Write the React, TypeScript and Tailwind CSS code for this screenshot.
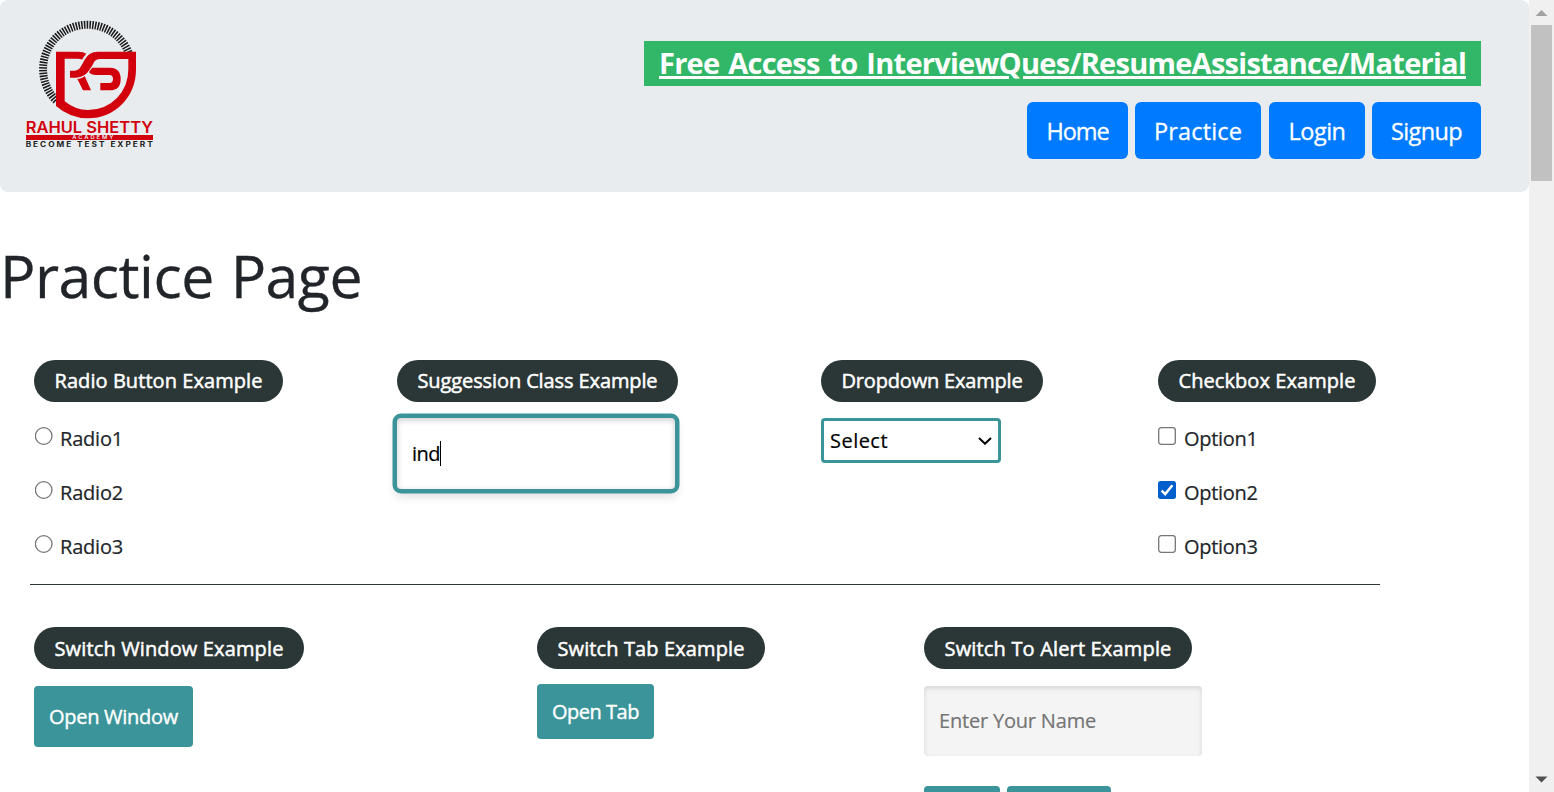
import { useLayoutEffect, useRef, useState } from "react";

const FONT = "font-['Open_Sans',sans-serif]";

/** Text tracked so that its advance equals `w` pixels. */
function Fit({ w, word = 0, children }: { w: number; word?: number; children: string }) {
  const ref = useRef<HTMLSpanElement>(null);
  const [gap, setGap] = useState(0);
  useLayoutEffect(() => {
    if (ref.current) {
      ref.current.style.letterSpacing = "0px";
      const natural = ref.current.getBoundingClientRect().width;
      const next = (w - natural) / children.length;
      ref.current.style.letterSpacing = next + "px";
      setGap(next);
    }
  }, [w, word, children]);
  return (
    <span ref={ref} className="inline-block whitespace-nowrap" style={{ letterSpacing: gap, wordSpacing: word }}>
      {children}
    </span>
  );
}

function Logo() {
  return (
    <svg className="h-[200px] w-[180px] shrink-0" viewBox="0 0 540 600" aria-label="Rahul Shetty Academy">
      <path
        d="M 169 302 A 133 133 0 1 1 387 161"
        fill="none"
        stroke="#1c1c1c"
        strokeWidth="24"
        strokeDasharray="4.6 3.6"
      />
      <g fill="#d2000c">
        <path d="M168 155H236Q250 155 259 161L247 179Q241 176 232 176H194V304Q226 330 264 330Q316 330 351 294Q385 259 385 208V177H300Q287 177 281 188Q277 197 270 208Q254 233 229 233H210V212H224Q236 212 243 199L254 179Q267 155 293 155H408V208Q408 270 366 313Q324 355 264 355Q210 355 168 318Z" />
        <path d="M277 203H330Q362 204 362 237Q362 271 330 271H301V249H328Q339 249 339 237Q339 225 328 225H285Q268 224 267 214Z" />
        <path d="M232 237Q246 235 254 228L273 271H249Z" />
      </g>
      <path d="M277 199Q267 219 256 226Q247 234 230 236" fill="none" stroke="#e8ecef" strokeWidth="2" />
      <path d="M262 161Q252 168 246 180" fill="none" stroke="#e8ecef" strokeWidth="2" />
      <text x="77" y="398" fontSize="46" fontWeight="600" fill="#d2000c" textLength="382" lengthAdjust="spacingAndGlyphs" className="font-['Inter',sans-serif]">RAHUL SHETTY</text>
      <rect x="78" y="405" width="381" height="15" fill="#d2000c" />
      <text x="217" y="418" fontSize="15" fontWeight="600" fill="#e8ecef" textLength="129" letterSpacing="5" lengthAdjust="spacingAndGlyphs" className="font-['Inter',sans-serif]">ACADEMY</text>
      <text x="77" y="440" fontSize="21" fontWeight="700" fill="#1c1c1c" textLength="387" letterSpacing="5" lengthAdjust="spacingAndGlyphs" className="font-['Inter',sans-serif]">BECOME TEST EXPERT</text>
    </svg>
  );
}

function NavButton({ box, w, label }: { box: string; w: number; label: string }) {
  return (
    <button className={`flex h-[57px] items-center justify-center rounded-[6px] bg-[#007bff] text-[23.5px] leading-[36px] text-white [-webkit-text-stroke:0.3px_#fff] ${box}`}>
      <Fit w={w}>{label}</Fit>
    </button>
  );
}

function Pill({ box, w, label }: { box: string; w: number; label: string }) {
  return (
    <div className={`flex h-[42px] items-center justify-center rounded-full bg-[#2b3636] text-[20px] leading-[30px] text-white [-webkit-text-stroke:0.5px_#fff] ${box}`}>
      <Fit w={w}>{label}</Fit>
    </div>
  );
}

function Choice({ kind, label, w, checked }: { kind: "radio" | "check"; label: string; w: number; checked?: boolean }) {
  return (
    <label className="flex h-[54px] text-[20px] leading-[30px] text-[#212529] [-webkit-text-stroke:0.2px_#212529]">
      <svg className="mt-[3px] h-[18px] w-[18px]" viewBox="0 0 18 18">
        {kind === "radio" && <circle cx="8.7" cy="9" r="8.3" fill="#fff" stroke="#767676" strokeWidth="1.3" />}
        {kind === "check" && !checked && <rect x="0.7" y="0.7" width="16.6" height="16.6" rx="2.5" fill="#fff" stroke="#767676" strokeWidth="1.3" />}
        {checked && (
          <>
            <rect width="18" height="18" rx="2.7" fill="#005fcc" />
            <path d="M3.6 9.6L7.2 13.1L14.4 4.2" fill="none" stroke="#fff" strokeWidth="2.5" />
          </>
        )}
      </svg>
      <span className={kind === "radio" ? "ml-[7px]" : "ml-[8px]"}>
        <Fit w={w}>{label}</Fit>
      </span>
    </label>
  );
}

export default function App() {
  return (
    <div className={`flex h-[792px] w-[1554px] overflow-hidden bg-white ${FONT}`}>
      <main className="h-[792px] w-[1529px] overflow-hidden">
        <header className="flex h-[192px] justify-between overflow-hidden rounded-[8px] bg-[#e8ecef] pr-[48px]">
          <Logo />
          <div className="flex flex-col items-end pt-[41px]">
            <a className="flex h-[45px] w-[837px] items-center justify-center bg-[#32b768] pb-[2px] text-[29px] font-bold leading-[43px] text-white underline decoration-[3px] underline-offset-[2px]">
              <Fit w={807} word={2}>Free Access to InterviewQues/ResumeAssistance/Material</Fit>
            </a>
            <nav className="mt-4 flex">
              <NavButton box="w-[101px]" w={62} label="Home" />
              <NavButton box="ml-[7px] w-[126px]" w={88} label="Practice" />
              <NavButton box="ml-[8px] w-[96px]" w={57} label="Login" />
              <NavButton box="ml-[7px] w-[109px]" w={71} label="Signup" />
            </nav>
          </div>
        </header>

        <h1 className="mt-[47px] h-[72px] text-[59px] font-normal leading-[72px] text-[#212529] [-webkit-text-stroke:0.3px_#212529]">
          <Fit w={362} word={2}>Practice Page</Fit>
        </h1>

        <section className="ml-[30px] mt-[49px] flex h-[225px] w-[1350px] border-b border-[#2b3636] pl-1">
          <div className="w-[363px]">
            <Pill box="w-[249px] pb-[1px]" w={208} label="Radio Button Example" />
            <div className="ml-[1px] mt-[22px]">
              <Choice kind="radio" label="Radio1" w={63} />
              <Choice kind="radio" label="Radio2" w={63} />
              <Choice kind="radio" label="Radio3" w={63} />
            </div>
          </div>
          <div className="w-[424px]">
            <Pill box="w-[281px] pb-[1px]" w={240} label="Suggession Class Example" />
            <div className="mt-[16px] flex h-[71px] w-[278px] items-center rounded-[4px] bg-white pl-[15px] text-[20px] leading-[30px] text-black shadow-[inset_0_2px_6px_rgba(0,0,0,0.2),0_0_0_4.5px_#3a949a,0_6px_10px_2px_rgba(0,0,0,0.13)] [-webkit-text-stroke:0.2px_#000]">
              <Fit w={28}>ind</Fit>
              <span className="h-[25px] w-px bg-black" />
            </div>
          </div>
          <div className="w-[337px]">
            <Pill box="w-[222px] pb-[1px]" w={181} label="Dropdown Example" />
            <div className="mt-[16px] flex h-[45px] w-[180px] items-center justify-between rounded-[4px] border-[3px] border-[#3a949a] bg-white pl-[6px] pr-[6px] text-[20px] leading-[30px] text-black [-webkit-text-stroke:0.2px_#000]">
              <Fit w={58}>Select</Fit>
              <svg className="h-[8px] w-[14px]" viewBox="0 0 14 8">
                <path d="M1 1L7 6.7L13 1" fill="none" stroke="#000" strokeWidth="2" />
              </svg>
            </div>
          </div>
          <div>
            <Pill box="w-[218px] pb-[1px]" w={177} label="Checkbox Example" />
            <div className="mt-[22px]">
              <Choice kind="check" label="Option1" w={73.5} />
              <Choice kind="check" label="Option2" w={73.5} checked />
              <Choice kind="check" label="Option3" w={73.5} />
            </div>
          </div>
        </section>

        <section className="ml-[34px] mt-[42px] flex text-[20px] leading-[30px]">
          <div className="w-[503px]">
            <Pill box="w-[270px] pt-[1px]" w={229} label="Switch Window Example" />
            <button className="mt-[17px] flex h-[61px] w-[159px] items-center justify-center rounded-[4px] bg-[#3a949a] text-white [-webkit-text-stroke:0.4px_#fff]">
              <Fit w={129}>Open Window</Fit>
            </button>
          </div>
          <div className="w-[387px]">
            <Pill box="w-[228px] pt-[1px]" w={187} label="Switch Tab Example" />
            <button className="mt-[15px] flex h-[55px] w-[117px] items-center justify-center rounded-[4px] bg-[#3a949a] text-white [-webkit-text-stroke:0.4px_#fff]">
              <Fit w={87}>Open Tab</Fit>
            </button>
          </div>
          <div>
            <Pill box="w-[268px] pt-[1px]" w={227} label="Switch To Alert Example" />
            <div className="mt-[17px] flex h-[70px] w-[278px] items-center rounded-[4px] bg-[#f4f4f4] pl-[15px] text-[#757575] shadow-[inset_0_2px_5px_rgba(0,0,0,0.13)] [-webkit-text-stroke:0.2px_#757575]">
              <Fit w={157}>Enter Your Name</Fit>
            </div>
            <div className="mt-[30px] flex gap-[7px]">
              <button className="h-[56px] w-[76px] rounded-[4px] bg-[#3a949a]" aria-label="Alert" />
              <button className="h-[56px] w-[104px] rounded-[4px] bg-[#3a949a]" aria-label="Confirm" />
            </div>
          </div>
        </section>
      </main>

      <aside className="flex w-[25px] flex-col items-center bg-[#f0f0f0]">
        <svg className="h-[25px] w-[25px]" viewBox="0 0 25 25">
          <path d="M6.5 16L12.5 10L18.5 16Z" fill="#a3a3a3" />
        </svg>
        <div className="h-[156px] w-[21px] bg-[#c1c1c1]" />
        <svg className="mt-auto h-[25px] w-[25px]" viewBox="0 0 25 25">
          <path d="M6.5 9.5L12.5 15.5L18.5 9.5Z" fill="#505050" />
        </svg>
      </aside>
    </div>
  );
}
